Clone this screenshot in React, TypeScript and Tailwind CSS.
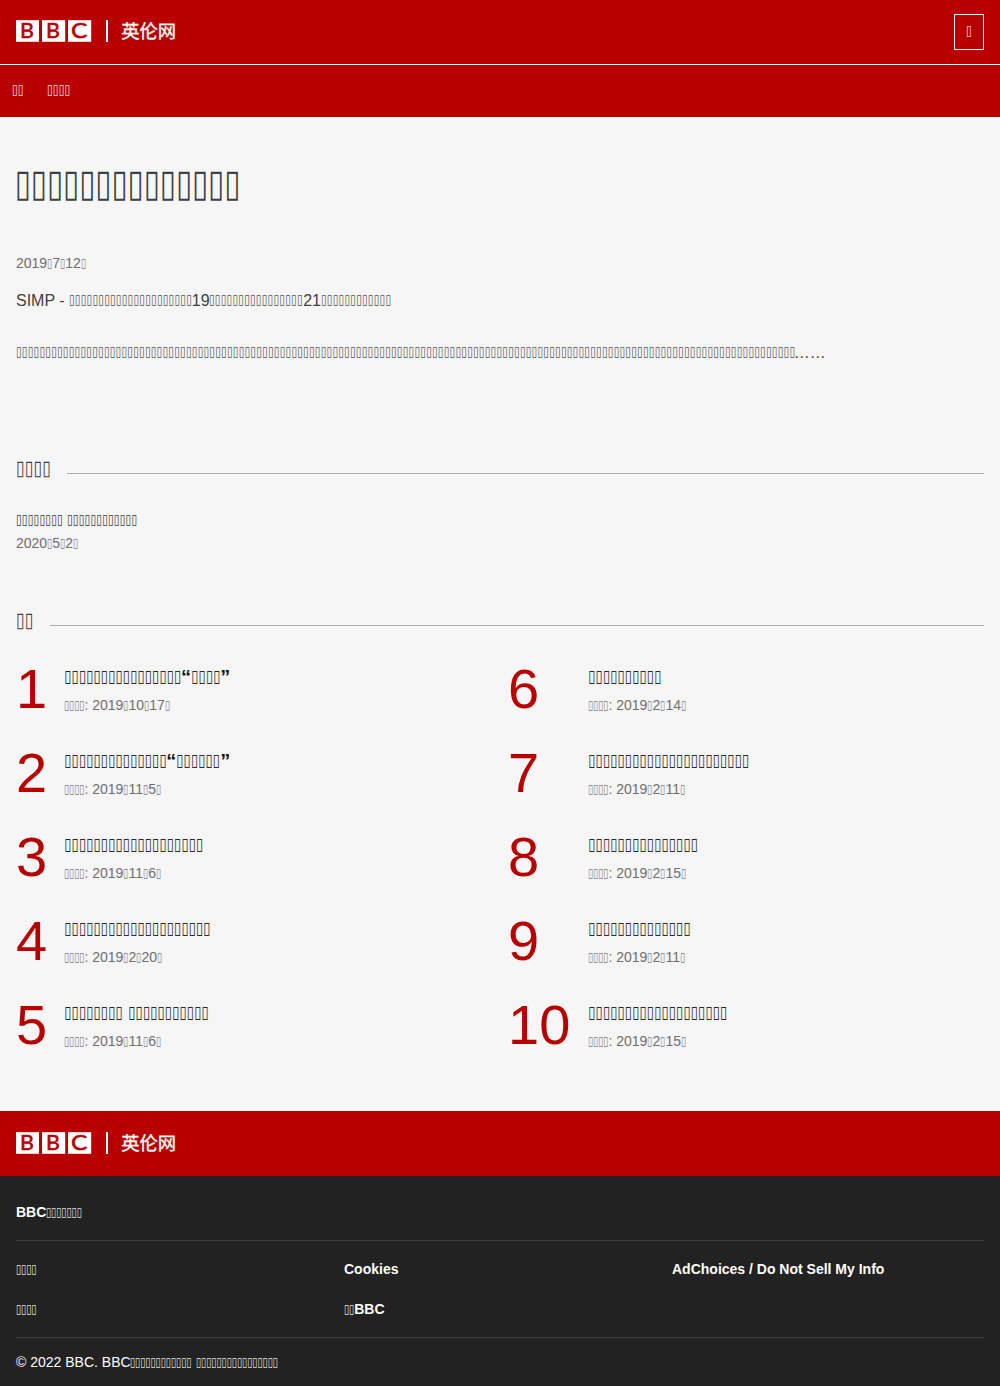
import React from "react";

/* A run of narrow placeholder characters, each 0.3655em wide. */
function Run({ text }: { text: string }) {
  return (
    <span
      className="inline-block whitespace-nowrap leading-none"
      style={{ width: `${text.length * 0.3655}em` }}
    >
      <span className="relative -left-[0.02em] -top-[0.125em] inline-block origin-left scale-x-[0.777] font-['DejaVu_Sans'] text-[0.857em] font-normal leading-none opacity-90">
        {text}
      </span>
    </span>
  );
}

function T({ children }: { children: string }) {
  return (
    <>
      {children.split(/(▯+)/).map((part, i) =>
        part.startsWith("▯") ? <Run key={i} text={part} /> : <React.Fragment key={i}>{part}</React.Fragment>
      )}
    </>
  );
}

function Logo() {
  return (
    <svg width="162" height="24" viewBox="0 0 162 24" className="block overflow-visible">
      <g fill="#fff">
        <rect x="0" y="0.2" width="23" height="21.6" />
        <rect x="26" y="0.2" width="23.2" height="21.6" />
        <rect x="52" y="0.2" width="23.2" height="21.6" />
        <rect x="90" y="0" width="2" height="22" />
      </g>
      <g fill="#b80000" stroke="#b80000" strokeWidth="0.6" fontFamily="Lato" fontWeight="400" fontSize="21.5">
        <text x="4" y="18.4">B</text>
        <text x="30.1" y="18.4">B</text>
        <text x="55" y="18.4" textLength="16.4" lengthAdjust="spacingAndGlyphs">C</text>
      </g>
      <text
        x="105.3"
        y="17.5"
        fill="#fff"
        stroke="#fff"
        strokeWidth="0.35"
        fontFamily="Noto Sans CJK SC"
        fontWeight="400"
        fontSize="18.3"
      >
        英伦网
      </text>
    </svg>
  );
}

function SectionHeading({ children }: { children: string }) {
  return (
    <div className="flex h-7 items-center">
      <h2 className="pr-4 pt-px text-2xl leading-7 [&_span]:opacity-100">
        <T>{children}</T>
      </h2>
      <div className="mt-2 h-px flex-1 bg-[#aeaeae]" />
    </div>
  );
}

const popular = [
  ["▯▯▯▯▯▯▯▯▯▯▯▯▯▯▯▯“▯▯▯▯”", "2019▯10▯17▯"],
  ["▯▯▯▯▯▯▯▯▯▯▯▯▯▯“▯▯▯▯▯▯”", "2019▯11▯5▯"],
  ["▯▯▯▯▯▯▯▯▯▯▯▯▯▯▯▯▯▯▯", "2019▯11▯6▯"],
  ["▯▯▯▯▯▯▯▯▯▯▯▯▯▯▯▯▯▯▯▯", "2019▯2▯20▯"],
  ["▯▯▯▯▯▯▯▯ ▯▯▯▯▯▯▯▯▯▯▯", "2019▯11▯6▯"],
  ["▯▯▯▯▯▯▯▯▯▯", "2019▯2▯14▯"],
  ["▯▯▯▯▯▯▯▯▯▯▯▯▯▯▯▯▯▯▯▯▯▯", "2019▯2▯11▯"],
  ["▯▯▯▯▯▯▯▯▯▯▯▯▯▯▯", "2019▯2▯15▯"],
  ["▯▯▯▯▯▯▯▯▯▯▯▯▯▯", "2019▯2▯11▯"],
  ["▯▯▯▯▯▯▯▯▯▯▯▯▯▯▯▯▯▯▯", "2019▯2▯15▯"],
];

export default function App() {
  return (
    <div className="h-[1386px] bg-[#f6f6f6] font-['Liberation_Sans',Arial,sans-serif] text-[#3f3f42]">
      <header className="bg-[#b80000] text-white">
        <div className="flex h-[65px] items-start justify-between border-b border-white px-4">
          <div className="pt-5">
            <Logo />
          </div>
          <button className="mt-3.5 flex h-9 w-[30px] items-center justify-center border border-white text-base leading-5">
            <T>▯</T>
          </button>
        </div>
        <nav className="flex h-[52px] items-center text-base leading-5">
          <a className="px-3"><T>▯▯</T></a>
          <a className="px-3"><T>▯▯▯▯</T></a>
        </nav>
      </header>

      <main className="flex h-[994px] flex-col px-4">
        <h1 className="mt-[45px] text-[44px] leading-[48px] [&_span]:opacity-100"><T>▯▯▯▯▯▯▯▯▯▯▯▯▯▯</T></h1>
        <time className="mt-[43px] text-sm leading-5 text-[#6e6e73]"><T>2019▯7▯12▯</T></time>
        <p className="mt-[17px] text-base leading-[22px]">
          <T>SIMP - ▯▯▯▯▯▯▯▯▯▯▯▯▯▯▯▯▯▯▯▯▯19▯▯▯▯▯▯▯▯▯▯▯▯▯▯▯▯21▯▯▯▯▯▯▯▯▯▯▯▯</T>
        </p>
        <p className="mt-[30px] text-base leading-[22px]">
          <T>{"▯".repeat(133) + "……"}</T>
        </p>

        <section className="mt-[91px]">
          <SectionHeading>▯▯▯▯</SectionHeading>
          <div className="mt-[27px] flex flex-col">
            <a className="text-base font-bold leading-[22px] text-[#141414]"><T>▯▯▯▯▯▯▯▯ ▯▯▯▯▯▯▯▯▯▯▯▯</T></a>
            <time className="mt-px text-sm leading-5 text-[#6e6e73]"><T>2020▯5▯2▯</T></time>
          </div>
        </section>

        <section className="mt-[54px]">
          <SectionHeading>▯▯</SectionHeading>
          <ol className="mt-6 grid grid-flow-col grid-cols-[476px_476px] grid-rows-[repeat(5,84px)] gap-x-4">
            {popular.map(([title, date], i) => (
              <li key={i} className="flex items-start">
                <span className={`${i < 5 ? "w-12" : "w-20"} text-[56px] leading-[60px] text-[#b80000]`}>{i + 1}</span>
                <div className="flex flex-col pt-1.5">
                  <a className="text-xl font-bold leading-6 text-[#141414]"><T>{title}</T></a>
                  <span className="mt-1.5 text-sm leading-5 text-[#6e6e73]"><T>{"▯▯▯▯: " + date}</T></span>
                </div>
              </li>
            ))}
          </ol>
        </section>
      </main>

      <footer>
        <div className="h-[65px] bg-[#b80000] px-4 pt-[21px]">
          <Logo />
        </div>
        <div className="h-[210px] bg-[#222222] px-4 text-sm leading-5 text-white">
          <div className="h-[65px] border-b border-[#3f3f42] pt-[26px] font-bold"><T>BBC▯▯▯▯▯▯▯</T></div>
          <div className="grid h-[97px] grid-cols-3 grid-rows-[40px_40px] gap-x-4 border-b border-[#3f3f42] pt-[18px] font-bold">
            <a><T>▯▯▯▯</T></a>
            <a>Cookies</a>
            <a>AdChoices / Do Not Sell My Info</a>
            <a><T>▯▯▯▯</T></a>
            <a><T>▯▯BBC</T></a>
          </div>
          <p className="pt-3.5"><T>© 2022 BBC. BBC▯▯▯▯▯▯▯▯▯▯▯▯ ▯▯▯▯▯▯▯▯▯▯▯▯▯▯▯▯</T></p>
        </div>
      </footer>
    </div>
  );
}
